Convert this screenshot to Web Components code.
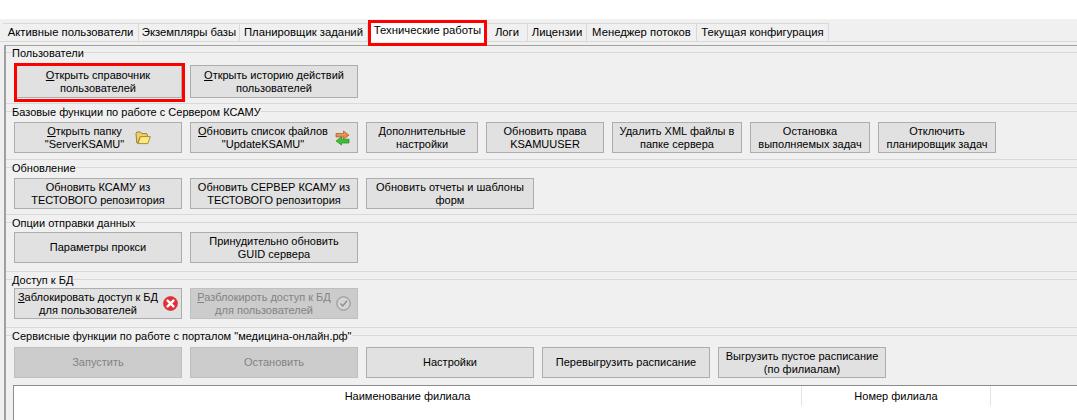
<!DOCTYPE html>
<html lang="ru">
<head>
<meta charset="utf-8">
<title>Технические работы</title>
<style>
    html, body {
        margin: 0;
        height: 420px;
        overflow: hidden;
        background: #fff;
    }
</style>
</head>
<body>

<app-window>
    <tab-bar slot="tabs">
        <tab-item width="136">Активные пользователи</tab-item>
        <tab-item width="101">Экземпляры базы</tab-item>
        <tab-item width="128">Планировщик заданий</tab-item>
        <tab-item width="119" active>Технические работы</tab-item>
        <tab-item width="41">Логи</tab-item>
        <tab-item width="59">Лицензии</tab-item>
        <tab-item width="110">Менеджер потоков</tab-item>
        <tab-item width="132">Текущая конфигурация</tab-item>
    </tab-bar>

    <tool-group title="Пользователи" style="--head: 12px; --foot: 5px; --row: 33px;">
        <tool-button width="168" marked><u>О</u>ткрыть справочник<br>пользователей</tool-button>
        <tool-button width="168"><u>О</u>ткрыть историю действий<br>пользователей</tool-button>
    </tool-group>

    <tool-group title="Базовые функции по работе с Сервером КСАМУ" style="--head: 10px; --foot: 6px; --row: 31px;">
        <tool-button width="168" style="gap: 11px;">
            <u>О</u>ткрыть папку<br>"ServerKSAMU"
            <svg slot="icon" width="16" height="14" viewBox="0 0 16 14">
                <path d="M1 2.5 L1.8 1 H5.5 L6.8 2.6 H11.8 L12.4 4 V6 H5 L2.8 12 H1.8 Z" fill="#f0d060" stroke="#8f7b32" stroke-width=".9"/>
                <path d="M3 12.6 L5.4 5.6 H15.4 L12.8 12.6 Z" fill="#ffe97f" stroke="#9c8636" stroke-width=".9"/>
            </svg>
        </tool-button>
        <tool-button width="168" style="gap: 7px;">
            <u>О</u>бновить список файлов<br>"UpdateKSAMU"
            <svg slot="icon" width="15" height="16" viewBox="0 0 15 16">
                <path d="M1 3.5 H8.5 V1 L14 5.2 L8.5 9 V7 H1 Z" fill="#f08a2c" stroke="#b0561f" stroke-width=".7"/>
                <path d="M2 4.6 H9.5 V3" fill="none" stroke="#c3a2c8" stroke-width="1"/>
                <path d="M14 9.2 H6.5 V7 L1 11 L6.5 15 V13 H14 Z" fill="#3fbf37" stroke="#1f8a25" stroke-width=".7"/>
            </svg>
        </tool-button>
        <tool-button width="112">Дополнительные<br>настройки</tool-button>
        <tool-button width="118">Обновить права<br>KSAMUUSER</tool-button>
        <tool-button width="130">Удалить XML файлы в<br>папке сервера</tool-button>
        <tool-button width="120">Остановка<br>выполняемых задач</tool-button>
        <tool-button width="118">Отключить<br>планировщик задач</tool-button>
    </tool-group>

    <tool-group title="Обновление" style="--head: 10px; --foot: 5px; --row: 31px;">
        <tool-button width="168">Обновить КСАМУ из<br>ТЕСТОВОГО репозитория</tool-button>
        <tool-button width="168">Обновить СЕРВЕР КСАМУ из<br>ТЕСТОВОГО репозитория</tool-button>
        <tool-button width="168">Обновить отчеты и шаблоны<br>форм</tool-button>
    </tool-group>

    <tool-group title="Опции отправки данных" style="--head: 9px; --foot: 8px; --row: 31px;">
        <tool-button width="168">Параметры прокси</tool-button>
        <tool-button width="168">Принудительно обновить<br>GUID сервера</tool-button>
    </tool-group>

    <tool-group title="Доступ к БД" style="--head: 8px; --foot: 8px; --row: 31px;">
        <tool-button width="168" style="gap: 5px;">
            <u>З</u>аблокировать доступ к БД<br>для пользователей
            <svg slot="icon" width="15" height="15" viewBox="0 0 15 15">
                <circle cx="7.5" cy="7.5" r="7" fill="#e2303a" stroke="#c9252c" stroke-width=".6"/>
                <path d="M4.6 4.6 L10.4 10.4 M10.4 4.6 L4.6 10.4" stroke="#fff" stroke-width="2.4" stroke-linecap="round"/>
            </svg>
        </tool-button>
        <tool-button width="168" style="gap: 5px;" disabled>
            <u>Р</u>азблокироть доступ к БД<br>для пользователей
            <svg slot="icon" width="15" height="15" viewBox="0 0 15 15">
                <circle cx="7.5" cy="7.5" r="6.8" fill="#c4c4c4" stroke="#989898" stroke-width="1"/>
                <circle cx="7.5" cy="7.5" r="5" fill="#d4d4d4" stroke="#e2e2e2" stroke-width=".6"/>
                <path d="M4.4 7.6 L6.7 10 L11 4.8" fill="none" stroke="#8e8e8e" stroke-width="1.4"/>
            </svg>
        </tool-button>
    </tool-group>

    <tool-group title='Сервисные функции по работе с порталом "медицина-онлайн.рф"' last style="--head: 11px; --foot: 7px; --row: 31px;">
        <tool-button width="168" disabled>Запустить</tool-button>
        <tool-button width="168" disabled>Остановить</tool-button>
        <tool-button width="168">Настройки</tool-button>
        <tool-button width="168">Перевыгрузить расписание</tool-button>
        <tool-button width="168">Выгрузить пустое расписание<br>(по филиалам)</tool-button>
    </tool-group>

    <branch-table></branch-table>
</app-window>

<script>
const UI_FONT = '"Liberation Sans", Arial, sans-serif';

class AppWindow extends HTMLElement {
    constructor() {
        super();
        this.attachShadow({ mode: 'open' });
        this.shadowRoot.innerHTML = `
            <style>
                :host {
                    display: block;
                    margin-top: 19px;
                    height: 401px;
                    background: #f0f0f0;
                    color: #000;
                    font: 11px/13px ${UI_FONT};
                    overflow: hidden;
                }
                .panel {
                    margin: 3px 0 0 4px;
                    border-top: 1px solid #a0a0a0;
                    border-left: 2px solid #a0a0a0;
                    padding-top: 6px;
                }
            </style>
            <slot name="tabs"></slot>
            <div class="panel"><slot></slot></div>
        `;
    }
}

class TabBar extends HTMLElement {
    constructor() {
        super();
        this.attachShadow({ mode: 'open' });
        this.shadowRoot.innerHTML = `
            <style>
                :host {
                    display: flex;
                    align-items: flex-end;
                    height: 22px;
                    padding: 0 0 0 3px;
                    border-bottom: 1px solid #d9d9d9;
                    font-size: 11.3px;
                }
            </style>
            <slot></slot>
        `;
    }
}

class TabItem extends HTMLElement {
    constructor() {
        super();
        this.attachShadow({ mode: 'open' });
        this.shadowRoot.innerHTML = `
            <style>
                :host {
                    display: flex;
                    position: relative;
                    align-items: center;
                    justify-content: center;
                    box-sizing: border-box;
                    height: 18px;
                    border: 1px solid #d9d9d9;
                    border-width: 1px 1px 0 0;
                    white-space: nowrap;
                }
                :host([active]) {
                    height: 22px;
                    margin-bottom: -1px;
                    padding-bottom: 2px;
                    background: #fff;
                    border: 0;
                    z-index: 1;
                }
                :host([active])::after {
                    content: "";
                    position: absolute;
                    inset: 0 0 -4px 0;
                    border: 3px solid #f00;
                }
            </style>
            <slot></slot>
        `;
    }

    connectedCallback() {
        this.style.width = this.getAttribute('width') + 'px';
    }
}

class ToolGroup extends HTMLElement {
    constructor() {
        super();
        this.attachShadow({ mode: 'open' });
    }

    connectedCallback() {
        const title = this.getAttribute('title');
        this.removeAttribute('title');

        this.shadowRoot.innerHTML = `
            <style>
                :host {
                    display: block;
                    margin-bottom: 7px;
                    border-bottom: 1px solid #d9d9d9;
                }
                :host([last]) {
                    margin-bottom: 0;
                    border-bottom: 0;
                }
                .head {
                    display: flex;
                    align-items: center;
                    height: 1px;
                    background: #d9d9d9;
                    padding-left: 6px;
                }
                .head span {
                    position: relative;
                    top: 1px;
                    background: #f0f0f0;
                    white-space: nowrap;
                }
                .row {
                    display: flex;
                    gap: 8px;
                    padding: var(--head) 0 var(--foot) 8px;
                }
                ::slotted(tool-button) {
                    height: var(--row);
                }
            </style>
            <div class="head"><span>${title}</span></div>
            <div class="row"><slot></slot></div>
        `;
    }
}

class ToolButton extends HTMLElement {
    constructor() {
        super();
        this.attachShadow({ mode: 'open' });
        this.shadowRoot.innerHTML = `
            <style>
                :host {
                    display: flex;
                    position: relative;
                    flex: none;
                    align-items: center;
                    justify-content: center;
                    gap: 8px;
                    box-sizing: border-box;
                    background: #e1e1e1;
                    border: 1px solid #adadad;
                    text-align: center;
                    white-space: nowrap;
                }
                :host([disabled]) {
                    background: #cccccc;
                    border-color: #bfbfbf;
                    color: #838383;
                }
                :host([marked])::after {
                    content: "";
                    position: absolute;
                    inset: -3px -4px -5px -1px;
                    border: 3px solid #f00;
                }
                .label { display: block; }
                .icon { display: flex; }
            </style>
            <span class="label"><slot></slot></span>
            <span class="icon"><slot name="icon"></slot></span>
        `;
    }

    connectedCallback() {
        this.style.width = this.getAttribute('width') + 'px';
        if (!this.querySelector('[slot=icon]')) {
            this.shadowRoot.querySelector('.icon').remove();
        }
    }
}

class BranchTable extends HTMLElement {
    constructor() {
        super();
        this.attachShadow({ mode: 'open' });
        this.shadowRoot.innerHTML = `
            <style>
                :host {
                    display: block;
                    margin-left: 7px;
                    height: 40px;
                    background: #fff;
                    border-top: 1px solid #8c8c8c;
                    border-left: 1px solid #8c8c8c;
                }
                .head {
                    display: grid;
                    grid-template-columns: 788px 189px 1fr;
                    height: 20px;
                }
                .head div {
                    display: flex;
                    align-items: center;
                    justify-content: center;
                    border-right: 1px solid #e3e3e3;
                }
                .head div:last-child { border-right: 0; }
            </style>
            <div class="head">
                <div>Наименование филиала</div>
                <div>Номер филиала</div>
                <div></div>
            </div>
        `;
    }
}

customElements.define('app-window', AppWindow);
customElements.define('tab-bar', TabBar);
customElements.define('tab-item', TabItem);
customElements.define('tool-group', ToolGroup);
customElements.define('tool-button', ToolButton);
customElements.define('branch-table', BranchTable);
</script>
</body>
</html>
